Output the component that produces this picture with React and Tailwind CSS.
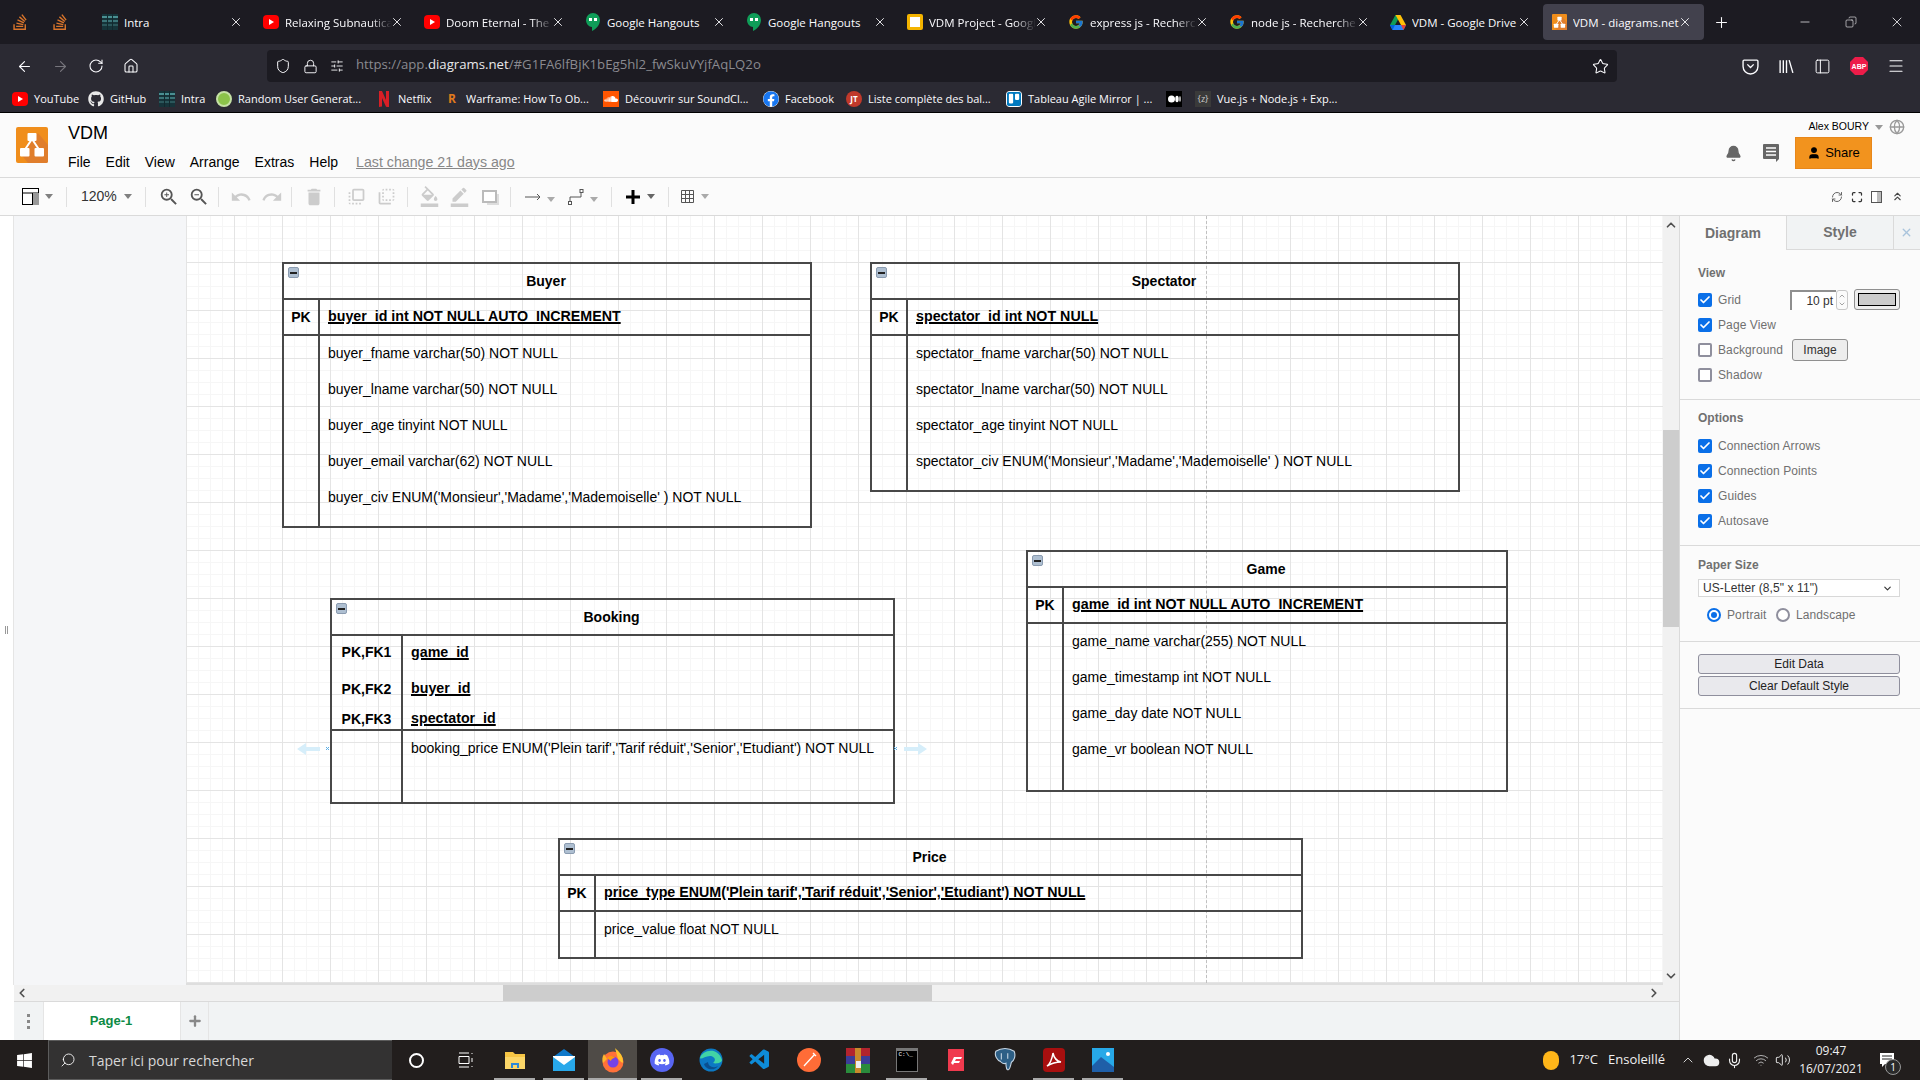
import React from "react";
import { ArrowLeft, ArrowRight, RotateCw, House, Shield, Lock, SlidersHorizontal, Star, Menu, X, Plus, Minus, Bell, PanelLeft, Search, Check, ChevronDown, ChevronUp, ChevronLeft, ChevronRight, Globe, User, RefreshCw, Maximize, ChevronsUp, Mic, Wifi, Volume2, Cloud, Copy } from "lucide-react";
import { FaStackOverflow, FaGithub, FaSoundcloud, FaFacebook, FaTrello, FaWindows, FaDiscord } from "react-icons/fa";
import { FcGoogle } from "react-icons/fc";
import { VscVscode } from "react-icons/vsc";
import { MdUndo, MdRedo, MdDelete, MdFlipToFront, MdFlipToBack, MdFormatColorFill, MdBorderColor, MdZoomIn, MdZoomOut } from "react-icons/md";

const Yt = () => (
  <svg width="16" height="16" viewBox="0 0 16 16"><rect x="0" y="1" width="16" height="14" rx="4" fill="#f00" /><path d="M6 5l5 3-5 3z" fill="#fff" /></svg>
);
const Hang = () => (
  <svg width="16" height="18" viewBox="0 0 16 18"><path d="M8 0a7 7 0 0 0-7 7c0 3.800 3 7 6 7v4c4-2 8-6 8-11a7 7 0 0 0-7-7z" fill="#0f9d58" /><rect x="4" y="5" width="3" height="3" fill="#fff" /><rect x="9" y="5" width="3" height="3" fill="#fff" /></svg>
);
const Intra = () => (
  <svg width="16" height="16" viewBox="0 0 16 16"><rect width="16" height="16" fill="#16343a" /><rect y="2" width="16" height="2" fill="#4a8f92" /><rect y="6" width="16" height="2" fill="#3b7478" /><rect y="10" width="16" height="2" fill="#2b575b" /><rect x="5" width="1" height="16" fill="#12292e" /><rect x="10" width="1" height="16" fill="#12292e" /></svg>
);
const DocIcon = () => (
  <svg width="16" height="16" viewBox="0 0 16 16"><rect width="16" height="16" rx="2" fill="#f4b400" /><rect x="3" y="3" width="10" height="10" fill="#fff" /></svg>
);
const Drive = () => (
  <svg width="16" height="15" viewBox="0 0 16 15"><path d="M5.500 0h5L5 10H0z" fill="#0f9d58" transform="translate(0 0)" /><path d="M5.500 0h5L16 10h-5z" fill="#ffc107" /><path d="M0 10h16l-2.500 5h-11z" fill="#2684fc" /><path d="M0 10h5l-2.500 5z" fill="#0066da" /><path d="M11 10h5l-2.500 5z" fill="#ea4335" /></svg>
);
const DrawLogo = ({ size = 16 }) => (
  <svg width={size} height={size * 1.125} viewBox="0 0 32 36">
    <rect width="32" height="36" rx="2" fill="#f08e1c" />
    <path d="M22 6l10 12v16a2 2 0 0 1-2 2H12L4 26z" fill="#e07e2c" />
    <path d="M16 12L8 24M16 12l8 12" stroke="#fff" strokeWidth="2" />
    <rect x="11.500" y="6" width="9" height="8" rx="1" fill="#fff" />
    <rect x="4" y="21" width="9.500" height="8.500" rx="1" fill="#fff" />
    <rect x="18.500" y="21" width="9.500" height="8.500" rx="1" fill="#fff" />
  </svg>
);
const Netflix = () => (
  <svg width="14" height="16" viewBox="0 0 14 16"><path d="M2 0h3l4 9V0h3v16c-1 0-2-.2-3-.3L5 7v8.500L2 16z" fill="#d81f26" /></svg>
);
const Abp = () => (
  <svg width="18" height="18" viewBox="0 0 18 18"><path d="M5 0h8l5 5v8l-5 5H5l-5-5V5z" fill="#ed1c49" /><text x="9" y="12" fontSize="7" fontWeight="700" fontFamily="Liberation Sans" fill="#fff" textAnchor="middle">ABP</text></svg>
);
const Medium = () => (
  <svg width="16" height="16" viewBox="0 0 16 16"><rect width="16" height="16" fill="#000" /><circle cx="5.500" cy="8" r="3.500" fill="#fff" /><ellipse cx="11" cy="8" rx="1.700" ry="3.300" fill="#fff" /><ellipse cx="14" cy="8" rx=".7" ry="3" fill="#fff" /></svg>
);

const tabs = [
  { t: "Intra", i: <Intra /> },
  { t: "Relaxing Subnautica", i: <Yt />, f: 1 },
  { t: "Doom Eternal - The Only", i: <Yt />, f: 1 },
  { t: "Google Hangouts", i: <Hang /> },
  { t: "Google Hangouts", i: <Hang /> },
  { t: "VDM Project - Google", i: <DocIcon />, f: 1 },
  { t: "express js - Recherche", i: <FcGoogle size={16} />, f: 1 },
  { t: "node js - Recherche Google", i: <FcGoogle size={16} />, f: 1 },
  { t: "VDM - Google Drive", i: <Drive /> },
  { t: "VDM - diagrams.net", i: <DrawLogo size={15} />, a: 1 },
];

const bookmarks = [
  { w: "w-[76px]", t: "YouTube", i: <Yt /> },
  { w: "w-[71px]", t: "GitHub", i: <FaGithub size={16} color="#e8e8e8" /> },
  { w: "w-[57px]", t: "Intra", i: <Intra /> },
  { w: "w-[160px]", t: "Random User Generat...", i: <span className="w-4 h-4 rounded-full bg-[#8bc34a] border-2 border-[#c5e1a5]" /> },
  { w: "w-[68px]", t: "Netflix", i: <Netflix /> },
  { w: "w-[159px]", t: "Warframe: How To Ob...", i: <span className="w-4 text-center text-[#e07a1c] font-bold text-[12px] leading-none">R</span> },
  { w: "w-[160px]", t: "Découvrir sur SoundCl...", i: <span className="w-4 h-4 bg-[#ff5500] flex items-center justify-center"><FaSoundcloud size={14} color="#fff" /></span> },
  { w: "w-[83px]", t: "Facebook", i: <FaFacebook size={16} color="#1877f2" className="bg-white rounded-full" /> },
  { w: "w-[160px]", t: "Liste complète des bal...", i: <span className="w-4 h-4 rounded-full bg-[#c0392b] text-white text-[8px] font-bold flex items-center justify-center">JT</span> },
  { w: "w-[160px]", t: "Tableau Agile Mirror | ...", i: <FaTrello size={16} color="#0079bf" className="bg-white rounded-sm" /> },
  { w: "w-[29px]", t: "", i: <Medium /> },
  { w: "w-[170px]", t: "Vue.js + Node.js + Exp...", i: <span className="w-4 h-4 bg-[#3a3a3a] text-[#ccc] text-[9px] flex items-center justify-center">{"{z}"}</span> },
];

const Caret = ({ c = "border-t-[#808080]" }) => (
  <span className={`inline-block w-0 h-0 border-l-[4px] border-r-[4px] border-t-[5px] border-l-transparent border-r-transparent ${c}`} />
);
const Sep = () => <span className="w-px h-[20px] bg-[#e0e0e0] shrink-0" />;

const tables = [
  {
    pos: "left-[96px] top-[46px] w-[530px] h-[266px]", title: "Buyer", col: "w-[36px]",
    pk: [["PK", "buyer_id int NOT NULL AUTO_INCREMENT", "h-[34px]"]],
    rows: ["buyer_fname varchar(50) NOT NULL", "buyer_lname varchar(50) NOT NULL", "buyer_age tinyint NOT NULL", "buyer_email varchar(62) NOT NULL", "buyer_civ ENUM('Monsieur','Madame','Mademoiselle' ) NOT NULL"],
  },
  {
    pos: "left-[684px] top-[46px] w-[590px] h-[230px]", title: "Spectator", col: "w-[36px]",
    pk: [["PK", "spectator_id int NOT NULL", "h-[34px]"]],
    rows: ["spectator_fname varchar(50) NOT NULL", "spectator_lname varchar(50) NOT NULL", "spectator_age tinyint NOT NULL", "spectator_civ ENUM('Monsieur','Madame','Mademoiselle' ) NOT NULL"],
  },
  {
    pos: "left-[840px] top-[334px] w-[482px] h-[242px]", title: "Game", col: "w-[36px]",
    pk: [["PK", "game_id int NOT NULL AUTO_INCREMENT", "h-[34px]"]],
    rows: ["game_name varchar(255) NOT NULL", "game_timestamp int NOT NULL", "game_day date NOT NULL", "game_vr boolean NOT NULL"],
  },
  {
    pos: "left-[144px] top-[382px] w-[565px] h-[206px]", title: "Booking", col: "w-[71px]",
    pk: [["PK,FK1", "game_id", "h-[33px]"], ["PK,FK2", "buyer_id", "h-[40px]"], ["PK,FK3", "spectator_id", "h-[20px]"]],
    rows: ["booking_price ENUM('Plein tarif','Tarif réduit','Senior','Etudiant') NOT NULL"],
  },
  {
    pos: "left-[372px] top-[622px] w-[745px] h-[121px]", title: "Price", col: "w-[36px]",
    pk: [["PK", "price_type ENUM('Plein tarif','Tarif réduit','Senior','Etudiant') NOT NULL", "h-[34px]"]],
    rows: ["price_value float NOT NULL"],
  },
];

const Table = ({ t }) => (
  <div className={`absolute ${t.pos} border-2 border-[#484848] flex flex-col text-[14px] text-black font-['Liberation_Sans',sans-serif]`}>
    <div className="relative h-[36px] shrink-0 border-b-2 border-[#484848] flex items-center justify-center font-bold pr-[2px]">
      <span className="absolute left-[4px] top-[3px] w-[11px] h-[11px] rounded-[2px] bg-[#aebfd1] border border-[#8a9bb0] flex items-center justify-center">
        <span className="w-[7px] h-[2px] bg-[#222]" />
      </span>
      {t.title}
    </div>
    <div className="shrink-0 border-b-2 border-[#484848] flex flex-col">
      {t.pk.map(([k, v, h]) => (
        <div key={k} className={`flex ${h} shrink-0`}>
          <div className={`${t.col} shrink-0 border-r-2 border-[#484848] flex items-center justify-center font-bold`}>{k}</div>
          <div className="pl-[8px] flex items-center text-[14.25px] font-bold underline decoration-[1.5px] whitespace-nowrap">{v}</div>
        </div>
      ))}
    </div>
    <div className="flex-1 flex">
      <div className={`${t.col} shrink-0 border-r-2 border-[#484848]`} />
      <div className="flex flex-col -mt-[1px]">
        {t.rows.map((r) => (
          <div key={r} className="h-[36px] pl-[8px] flex items-center whitespace-nowrap">{r}</div>
        ))}
      </div>
    </div>
  </div>
);

const Box = ({ on }) => (
  <span className={`w-[14px] h-[14px] rounded-[2px] shrink-0 flex items-center justify-center ${on ? "bg-[#0a6fe8]" : "bg-white border-2 border-[#8f8f9d]"}`}>
    {on && <Check size={12} color="#fff" strokeWidth={3.5} />}
  </span>
);
const CheckRow = ({ on, label, children }) => (
  <div className="h-[25px] flex items-center">
    <Box on={on} />
    <span className="ml-[6px] text-[12px] tracking-[0.1px] text-[#707070]">{label}</span>
    {children}
  </div>
);
const Heading = ({ children }) => <div className="h-[14px] leading-[14px] text-[12px] font-bold text-[#707070]">{children}</div>;

const TaskIcon = ({ children, on, hl }) => (
  <div className={`relative w-[49px] h-full flex items-center justify-center shrink-0 ${hl ? "bg-[#4f4b47]" : ""}`}>
    {children}
    {on && <span className={`absolute bottom-0 h-[2px] bg-[#aaa] ${hl ? "left-0 right-0" : "left-[4px] right-[4px]"}`} />}
  </div>
);

export default function App() {
  return (
    <div className="w-[1920px] h-[1080px] overflow-hidden flex flex-col bg-white font-['Open_Sans',sans-serif]">
      {/* tab strip */}
      <div className="h-[44px] shrink-0 bg-[#1c1b22] flex items-center text-[#fbfbfe] text-[11.5px]">
        <div className="w-[40px] flex justify-center"><FaStackOverflow size={18} color="#d9752b" /></div>
        <div className="w-[40px] flex justify-center"><FaStackOverflow size={18} color="#d9752b" /></div>
        <div className="w-[14px]" />
        {tabs.map((t, n) => (
          <div key={n} className={`w-[161px] h-[36px] shrink-0 flex items-center pl-[8px] rounded-[4px] ${t.a ? "bg-[#42414d]" : ""}`}>
            <span className="w-[16px] h-[18px] flex items-center justify-center shrink-0">{t.i}</span>
            <span className={`ml-[6px] mt-[1px] w-[107px] overflow-hidden whitespace-nowrap ${t.f ? "[mask-image:linear-gradient(to_right,black_80%,transparent)]" : ""}`}>{t.t}</span>
            <X size={14} className="-ml-[2px]" strokeWidth={1.5} />
          </div>
        ))}
        <Plus size={17} className="ml-[9px]" strokeWidth={1.5} />
        <div className="ml-auto flex items-center">
          <div className="w-[46px] flex justify-center"><Minus size={14} strokeWidth={1.2} /></div>
          <div className="w-[46px] flex justify-center"><Copy size={12} strokeWidth={1.2} className="-scale-x-100" /></div>
          <div className="w-[46px] flex justify-center"><X size={16} strokeWidth={1.2} /></div>
        </div>
      </div>
      {/* nav */}
      <div className="h-[44px] shrink-0 bg-[#2b2a33] flex items-center text-[#fbfbfe]">
        <div className="w-[48px] flex justify-center"><ArrowLeft size={17} strokeWidth={1.6} /></div>
        <div className="w-[24px] flex justify-center"><ArrowRight size={17} strokeWidth={1.6} className="text-[#77767d]" /></div>
        <div className="w-[47px] flex justify-center"><RotateCw size={16} strokeWidth={1.6} /></div>
        <div className="w-[24px] flex justify-center"><House size={16} strokeWidth={1.6} /></div>
        <div className="ml-[124px] w-[1350px] h-[32px] rounded-[4px] bg-[#1c1b22] flex items-center">
          <Shield size={16} strokeWidth={1.5} className="ml-[8px]" />
          <Lock size={15} strokeWidth={1.5} className="ml-[12px]" />
          <SlidersHorizontal size={14} strokeWidth={1.5} className="ml-[12px]" />
          <span className="ml-[12px] -mt-[2px] text-[13.2px] text-[#8a8a90] whitespace-nowrap">https://app.<span className="text-[#e8e8ea]">diagrams.net</span>/#G1FA6lfBjK1bEg5hl2_fwSkuVYjfAqLQ2o</span>
          <Star size={17} strokeWidth={1.5} className="ml-auto mr-[8px]" />
        </div>
        <div className="ml-[125px] flex items-center gap-[19px]">
          <svg width="17" height="17" viewBox="0 0 16 16" fill="none" stroke="#fbfbfe" strokeWidth="1.300"><path d="M2 2h12a1 1 0 0 1 1 1v5a7 7 0 0 1-14 0V3a1 1 0 0 1 1-1z" /><path d="M5 6l3 3 3-3" /></svg>
          <svg width="17" height="17" viewBox="0 0 16 16" fill="none" stroke="#fbfbfe" strokeWidth="1.300"><path d="M2 2v12M5 2v12M8 2v12M10.500 2l3.500 12" /></svg>
          <PanelLeft size={17} strokeWidth={1.4} />
          <Abp />
          <Menu size={18} strokeWidth={1.5} />
        </div>
      </div>
      {/* bookmarks */}
      <div className="h-[25px] shrink-0 bg-[#2b2a33] border-b border-black flex items-start pl-[12px] text-[#fbfbfe] text-[11px]">
        {bookmarks.map((b, n) => (
          <div key={n} className={`${b.w} shrink-0 h-[22px] flex items-center gap-[6px] whitespace-nowrap`}>
            <span className="w-[16px] h-[16px] flex items-center justify-center shrink-0">{b.i}</span>
            {b.t && <span>{b.t}</span>}
          </div>
        ))}
      </div>
      {/* app header */}
      <div className="h-[65px] shrink-0 bg-[#fbfbfb] border-b border-[#dadada] flex font-['Liberation_Sans',sans-serif]">
        <div className="w-[68px] pl-[16px] pt-[14px]"><DrawLogo size={32} /></div>
        <div className="flex flex-col pt-[9px]">
          <div className="text-[18px] leading-[22px] text-black">VDM</div>
          <div className="mt-[8px] flex items-center text-[14px] leading-[20px] text-black gap-[15px]">
            <span>File</span><span>Edit</span><span>View</span><span>Arrange</span><span>Extras</span><span>Help</span>
            <span className="ml-[3px] text-[14.2px] text-[#888] underline">Last change 21 days ago</span>
          </div>
        </div>
        <div className="ml-auto flex flex-col items-end pr-[48px] relative">
          <div className="absolute right-[15px] top-[6px] flex items-center text-[10.5px] text-black whitespace-nowrap">
            Alex BOURY
            <span className="mx-[6px]"><Caret c="border-t-[#999]" /></span>
            <Globe size={16} color="#999" />
          </div>
          <div className="mt-[24px] flex items-center">
            <Bell size={17} fill="#666" color="#666" />
            <svg width="20" height="20" viewBox="0 0 20 20" className="ml-[19px]"><path d="M3 1h14a1 1 0 0 1 1 1v14l-3 3v-3H3a1 1 0 0 1-1-1V2a1 1 0 0 1 1-1z" fill="#666" /><path d="M5 5h10M5 8.500h10M5 12h10" stroke="#fff" strokeWidth="1.500" /></svg>
            <button className="ml-[14px] w-[77px] h-[32px] bg-[#f2931e] border border-[#e8871a] flex items-center justify-center gap-[4px] text-[13px] text-black">
              <User size={14} fill="#000" /> Share
            </button>
          </div>
        </div>
      </div>
      {/* toolbar */}
      <div className="h-[38px] shrink-0 bg-[#fbfbfb] border-b border-[#dadada] flex items-center text-[#666] font-['Liberation_Sans',sans-serif]">
        <div className="w-[66px] pl-[22px] flex items-center gap-[6px]">
          <svg width="17" height="17" viewBox="0 0 17 17"><rect x=".5" y=".5" width="16" height="16" fill="#fff" stroke="#000" /><path d="M0 5h17" stroke="#000" /><rect x="11" y="5" width="6" height="12" fill="#999" /><path d="M10.500 5v12" stroke="#000" /></svg>
          <Caret />
        </div>
        <Sep />
        <div className="w-[78px] pl-[14px] flex items-center gap-[7px] text-[14px] text-[#333]">120% <Caret /></div>
        <Sep />
        <div className="w-[72px] pl-[12px] flex items-center gap-[8px]"><MdZoomIn size={22} color="#555" /><MdZoomOut size={22} color="#555" /></div>
        <Sep />
        <div className="w-[72px] pl-[11px] flex items-center gap-[9px]"><MdUndo size={22} color="#ccc" /><MdRedo size={22} color="#ccc" /></div>
        <Sep />
        <div className="w-[42px] pl-[11px] flex"><MdDelete size={22} color="#ccc" /></div>
        <Sep />
        <div className="w-[72px] pl-[11px] flex items-center gap-[9px]"><MdFlipToFront size={21} color="#ccc" /><MdFlipToBack size={21} color="#ccc" /></div>
        <Sep />
        <div className="w-[102px] pl-[11px] flex items-center gap-[9px]">
          <MdFormatColorFill size={21} color="#ccc" />
          <MdBorderColor size={21} color="#ccc" />
          <svg width="20" height="20" viewBox="0 0 20 20" className="ml-[2px]"><rect x="2" y="4" width="13" height="11" fill="#fff" stroke="#bbb" strokeWidth="2" /><path d="M16 7h2v11H6v-2h10z" fill="#ddd" /></svg>
        </div>
        <Sep />
        <div className="w-[100px] pl-[14px] flex items-center">
          <svg width="16" height="8" viewBox="0 0 16 8"><path d="M0 4h15M12 1l3 3-3 3" stroke="#555" fill="none" /></svg>
          <span className="ml-[6px]"><Caret c="border-t-[#aaa]" /></span>
          <svg width="16" height="16" viewBox="0 0 16 16" className="ml-[13px]"><path d="M2 13V8h11V3" stroke="#555" fill="none" /><rect x=".5" y="12.500" width="3" height="3" fill="#fff" stroke="#555" /><rect x="12" y=".5" width="3" height="3" fill="#fff" stroke="#555" /></svg>
          <span className="ml-[6px]"><Caret c="border-t-[#aaa]" /></span>
        </div>
        <Sep />
        <div className="w-[56px] pl-[14px] flex items-center gap-[7px]">
          <svg width="14" height="14" viewBox="0 0 14 14"><path d="M7 0v14M0 7h14" stroke="#000" strokeWidth="3" /></svg>
          <Caret c="border-t-[#666]" />
        </div>
        <Sep />
        <div className="pl-[12px] flex items-center gap-[7px]">
          <svg width="13" height="13" viewBox="0 0 13 13"><path d="M.5.5h12v12H.5zM4.500.5v12M8.500.5v12M.5 4.500h12M.5 8.500h12" fill="none" stroke="#555" /></svg>
          <Caret c="border-t-[#aaa]" />
        </div>
        <div className="ml-auto pr-[16px] flex items-center gap-[8px]">
          <RefreshCw size={12} color="#666" />
          <Maximize size={12} color="#333" strokeWidth={2.5} />
          <svg width="12" height="12" viewBox="0 0 12 12"><rect x=".5" y=".5" width="10" height="11" fill="#fff" stroke="#555" /><rect x="6" y="1" width="4" height="10" fill="#bbb" /></svg>
          <ChevronsUp size={13} color="#444" />
        </div>
      </div>
      {/* main */}
      <div className="flex-1 flex min-h-0 font-['Liberation_Sans',sans-serif]">
        <div className="w-[1680px] shrink-0 flex flex-col border-r border-[#dadada]">
          <div className="h-[769px] shrink-0 flex">
            <div className="w-[14px] bg-white shrink-0 relative border-r border-[#e5e5e5]">
              <span className="absolute left-[5px] top-[410px] w-[3px] h-[8px] border-x border-[#999]" />
            </div>
            <div className="w-[172px] shrink-0 bg-[#f5f6f8]" />
            <div className="relative flex-1 bg-white border-b-2 border-[#dedede] bg-[image:linear-gradient(#e4e4e4_1px,transparent_1px),linear-gradient(to_right,#e4e4e4_1px,transparent_1px),linear-gradient(#f6f6f6_1px,transparent_1px),linear-gradient(to_right,#f6f6f6_1px,transparent_1px)] bg-[size:48px_48px,48px_48px,12px_12px,12px_12px] bg-[position:0_-2px]">
              <span className="absolute left-[1020px] top-0 bottom-0 border-l border-dashed border-[#c0c0c0]" />
              {tables.map((t) => <Table key={t.title} t={t} />)}
              <svg width="34" height="16" viewBox="0 0 34 16" className="absolute left-[111px] top-[525px]">
                <path d="M0 8l9-6v4h14v4H9v4z" fill="#d6eefa" />
                <path d="M29 6l3 3M32 6l-3 3" stroke="#5aaee6" strokeWidth="1" />
              </svg>
              <svg width="34" height="16" viewBox="0 0 34 16" className="absolute left-[707px] top-[525px]">
                <path d="M34 8l-9-6v4H11v4h14v4z" fill="#d6eefa" />
                <path d="M1 6l3 3M4 6l-3 3" stroke="#5aaee6" strokeWidth="1" />
              </svg>
            </div>
            <div className="relative w-[16px] shrink-0 bg-[#f1f1f1] flex flex-col items-center justify-between py-[2px]">
              <ChevronUp size={14} strokeWidth={3} color="#505050" />
              <span className="absolute left-0 top-[214px] w-full h-[197px] bg-[#cdcdcd]" />
              <ChevronDown size={14} strokeWidth={3} color="#505050" />
            </div>
          </div>
          <div className="relative h-[17px] shrink-0 ml-[14px] bg-[#f1f1f1] border-b border-[#dadada] flex items-center justify-between px-[1px]">
            <ChevronLeft size={14} strokeWidth={3} color="#505050" />
            <span className="absolute left-[489px] top-0 h-[16px] w-[429px] bg-[#cdcdcd]" />
            <ChevronRight size={14} strokeWidth={3} color="#505050" className="mr-[17px]" />
          </div>
          <div className="flex-1 ml-[14px] bg-[#f1f3f4] flex items-stretch">
            <div className="w-[29px] flex items-center justify-center"><span className="w-[3px] h-[15px] border-y-[3px] border-[#888] relative after:absolute after:left-0 after:top-[3px] after:w-[3px] after:h-[3px] after:bg-[#888]" /></div>
            <div className="w-[138px] bg-white border-x border-[#e5e5e5] flex items-center justify-center pr-[2px] text-[13px] font-bold text-[#0d8a44]">Page-1</div>
            <div className="w-[28px] border-r border-[#e5e5e5] flex items-center justify-center"><Plus size={16} strokeWidth={3.5} color="#888" /></div>
          </div>
        </div>
        {/* side panel */}
        <div className="w-[240px] shrink-0 bg-[#fbfbfb] flex flex-col">
          <div className="h-[34px] shrink-0 flex text-[14px] font-bold text-[#707070]">
            <div className="w-[106px] flex items-center justify-center">Diagram</div>
            <div className="w-[107px] bg-[#f1f3f4] border-l border-b border-[#dadada] flex items-center justify-center">Style</div>
            <div className="flex-1 bg-[#f1f3f4] border-l border-b border-[#dadada] flex items-center justify-center pr-[2px]"><X size={13} strokeWidth={2.5} color="#a9c4dc" /></div>
          </div>
          <div className="h-[150px] pl-[18px] pr-[20px] pt-[16px] border-b border-[#dadada]">
            <Heading>View</Heading>
            <div className="mt-[7px]">
              <CheckRow on label="Grid">
                <div className="ml-[49px] flex items-center">
                  <div className="w-[46px] h-[20px] bg-white border-t-2 border-l-2 border-[#8f8f8f] flex items-center justify-end pr-[3px] text-[12px] text-[#333]">10 pt</div>
                  <div className="w-[12px] h-[20px] border border-[#c8c8c8] rounded-[3px] flex flex-col items-center justify-center text-[#777]">
                    <ChevronUp size={8} /><ChevronDown size={8} />
                  </div>
                  <div className="ml-[6px] w-[46px] h-[21px] rounded-[3px] border border-[#8f8f8f] bg-[#eeeeee] p-[3px]"><div className="w-full h-full bg-[#cccccc] border border-black" /></div>
                </div>
              </CheckRow>
              <CheckRow on label="Page View" />
              <div className="h-[25px] flex items-center">
                <Box />
                <span className="ml-[6px] w-[74px] text-[12px] tracking-[0.1px] text-[#707070]">Background</span>
                <div className="w-[56px] h-[22px] rounded-[3px] border border-[#8f8f8f] bg-[#ededed] flex items-center justify-center text-[12px] text-[#333]">Image</div>
              </div>
              <CheckRow label="Shadow" />
            </div>
          </div>
          <div className="h-[146px] pl-[18px] pr-[20px] pt-[11px] border-b border-[#dadada]">
            <Heading>Options</Heading>
            <div className="mt-[8px]">
              <CheckRow on label="Connection Arrows" />
              <CheckRow on label="Connection Points" />
              <CheckRow on label="Guides" />
              <CheckRow on label="Autosave" />
            </div>
          </div>
          <div className="h-[96px] pl-[18px] pr-[20px] pt-[12px] border-b border-[#dadada]">
            <Heading>Paper Size</Heading>
            <div className="mt-[7px] h-[18px] bg-white border border-[#d8d8d8] flex items-center justify-between pl-[4px] pr-[6px] text-[12px] tracking-[0.1px] text-[#333]">
              US-Letter (8,5" x 11")
              <ChevronDown size={11} strokeWidth={2.5} />
            </div>
            <div className="mt-[8px] h-[20px] flex items-center pl-[9px] text-[12px] tracking-[0.1px] text-[#707070]">
              <span className="w-[14px] h-[14px] rounded-full border-2 border-[#0a6fe8] bg-white flex items-center justify-center"><span className="w-[6px] h-[6px] rounded-full bg-[#0a6fe8]" /></span>
              <span className="ml-[6px] w-[49px]">Portrait</span>
              <span className="w-[14px] h-[14px] rounded-full border-2 border-[#8f8f9d] bg-white" />
              <span className="ml-[6px]">Landscape</span>
            </div>
          </div>
          <div className="h-[67px] pl-[18px] pr-[20px] pt-[12px] border-b border-[#dadada] flex flex-col gap-[2px]">
            <div className="h-[20px] rounded-[3px] border border-[#8f8f9d] bg-[#e9e9ed] flex items-center justify-center text-[12px] text-[#222]">Edit Data</div>
            <div className="h-[20px] rounded-[3px] border border-[#8f8f9d] bg-[#e9e9ed] flex items-center justify-center text-[12px] text-[#222]">Clear Default Style</div>
          </div>
        </div>
      </div>
      {/* taskbar */}
      <div className="h-[40px] shrink-0 bg-[#221e1d] flex items-center text-[#f0f0f0]">
        <div className="w-[48px] flex justify-center"><FaWindows size={17} color="#fff" /></div>
        <div className="w-[344px] h-full bg-[#333232] border-y border-l border-[#5c5c5c] flex items-center text-[14px] text-[#d8d8d8]">
          <Search size={16} strokeWidth={1.3} className="ml-[11px] -scale-x-100" color="#fff" />
          <span className="ml-[13px]">Taper ici pour rechercher</span>
        </div>
        <TaskIcon><span className="w-[15px] h-[15px] rounded-full border-2 border-white" /></TaskIcon>
        <TaskIcon>
          <svg width="16" height="16" viewBox="0 0 16 16" fill="none" stroke="#fff"><path d="M1 1h10M1 15h10M1 4.500h10v7H1zM14 1v1M14 6v4M14 14v1" /></svg>
        </TaskIcon>
        <TaskIcon on>
          <svg width="22" height="20" viewBox="0 0 22 20"><path d="M1 2h8l2 2h10v15H1z" fill="#f6c544" /><rect x="1" y="7" width="20" height="12" fill="#fbd668" /><path d="M7 18v-5h8v5h-2v-3H9v3z" fill="#2b88d8" /></svg>
        </TaskIcon>
        <TaskIcon on>
          <svg width="24" height="24" viewBox="0 0 24 24"><path d="M12 1l11 8v14H1V9z" fill="#0f78c9" /><rect x="1" y="9" width="22" height="14" fill="#28a8ea" /><path d="M1 9l11 8 11-8v-1H1z" fill="#fff" /></svg>
        </TaskIcon>
        <TaskIcon on hl>
          <svg width="24" height="26" viewBox="0 0 24 26">
            <circle cx="12" cy="15" r="10.500" fill="#ff7139" />
            <path d="M14 1c3 3 8 6 8 14 0 2-2 0-5-3z" fill="#ffc42c" />
            <path d="M3 7c-2 3-2 6-1 9l4-4z" fill="#ffb52c" />
            <circle cx="12" cy="15" r="5.500" fill="#7542e5" />
            <path d="M6 11c3-3 7-2 8 0-3 0-4 2-4 3z" fill="#ff980e" />
          </svg>
        </TaskIcon>
        <TaskIcon on>
          <span className="w-[24px] h-[24px] rounded-full bg-[#5865f2] flex items-center justify-center"><FaDiscord size={16} color="#fff" /></span>
        </TaskIcon>
        <TaskIcon>
          <svg width="24" height="24" viewBox="0 0 24 24"><circle cx="12" cy="12" r="11.500" fill="#0c79c4" /><path d="M1 10C3 2 19-2 23 12c0 3-6 4-9 3 4-3 1-7-3-7-5 0-9 4-10 2z" fill="#41d4a5" /><path d="M9 14c0 4 5 7 10 4-4 6-13 3-14-2z" fill="#0a4f8f" /></svg>
        </TaskIcon>
        <TaskIcon><VscVscode size={24} color="#0e8cd8" /></TaskIcon>
        <TaskIcon>
          <svg width="24" height="24" viewBox="0 0 24 24"><circle cx="12" cy="12" r="12" fill="#ff6c37" /><path d="M7 18L18 6M16 5l3 3" stroke="#fff" strokeWidth="1.300" fill="none" /></svg>
        </TaskIcon>
        <TaskIcon>
          <svg width="24" height="25" viewBox="0 0 24 25"><rect width="24" height="8" fill="#b3242e" /><rect y="8" width="24" height="8" fill="#3c3c98" /><rect y="16" width="24" height="9" fill="#2a8c3c" /><rect x="9" y="0" width="6" height="25" fill="#c98a2c" /><rect x="10" y="13" width="5" height="7" fill="#eee" /></svg>
        </TaskIcon>
        <TaskIcon on>
          <div className="w-[22px] h-[24px] bg-black border border-[#777] border-t-[3px] text-[6px] leading-[8px] pl-[2px] text-white font-mono">C:\_</div>
        </TaskIcon>
        <TaskIcon>
          <svg width="16" height="22" viewBox="0 0 16 22"><rect width="16" height="22" fill="#f03a4e" /><path d="M3 14l3-6h8l-1 2H8l-1 2h5l-1 2H6l-1 2z" fill="#fff" /></svg>
        </TaskIcon>
        <TaskIcon>
          <svg width="22" height="28" viewBox="0 0 24 27" fill="#2d5f86" stroke="#c6d5e3" strokeWidth="1.200"><path d="M2 4c6-4 14-4 20 0 2 5 0 10-3 12-1 3-1 6-3 8-2 1-3-2-3-7-2 1-5 0-6-2C4 14 0 9 2 4z" /><path d="M8 6v7M15 6v6" fill="none" /></svg>
        </TaskIcon>
        <TaskIcon on>
          <svg width="22" height="24" viewBox="0 0 22 24"><rect width="22" height="24" rx="4" fill="#a80f0f" /><path d="M4 18c3-2 5-7 6-13 1 5 3 8 8 9-5 0-9 1-14 4z" fill="none" stroke="#fff" strokeWidth="1.500" /></svg>
        </TaskIcon>
        <TaskIcon on>
          <svg width="22" height="24" viewBox="0 0 22 24"><rect width="22" height="24" fill="#27a9e8" /><circle cx="16" cy="6" r="2" fill="#fff" /><path d="M0 18l9-9 13 10v5H0z" fill="#1f5fa8" /></svg>
        </TaskIcon>
        <div className="ml-auto h-full flex items-center pr-[13px]">
          <span className="w-[16px] h-[19px] rounded-full bg-[#ffb619]" />
          <span className="ml-[10px] text-[13px]">17°C</span>
          <span className="ml-[10px] text-[13px]">Ensoleillé</span>
          <ChevronUp size={16} strokeWidth={1.3} className="ml-[15px]" />
          <Cloud size={17} fill="#eee" color="#eee" className="ml-[7px]" />
          <Mic size={17} strokeWidth={1.6} className="ml-[6px]" />
          <Wifi size={16} strokeWidth={1.4} className="ml-[10px] text-[#bbb]" />
          <Volume2 size={16} strokeWidth={1.4} className="ml-[6px] mr-[3px]" />
          <div className="ml-[1px] w-[72px] flex flex-col items-center text-[12px] leading-[18px]">
            <span>09:47</span>
            <span>16/07/2021</span>
          </div>
          <div className="relative w-[40px] h-full flex items-center justify-center">
            <svg width="16" height="15" viewBox="0 0 16 15" fill="#fff"><path d="M1 0h14v11H6l-3 3v-3H1z" /><path d="M3 3h10M3 6h10" stroke="#222" /></svg>
            <span className="absolute right-[6px] bottom-[5px] w-[16px] h-[16px] rounded-full bg-[#2a2a2a] border border-[#999] text-[10px] leading-[14px] text-center text-white">1</span>
          </div>
        </div>
      </div>
    </div>
  );
}
